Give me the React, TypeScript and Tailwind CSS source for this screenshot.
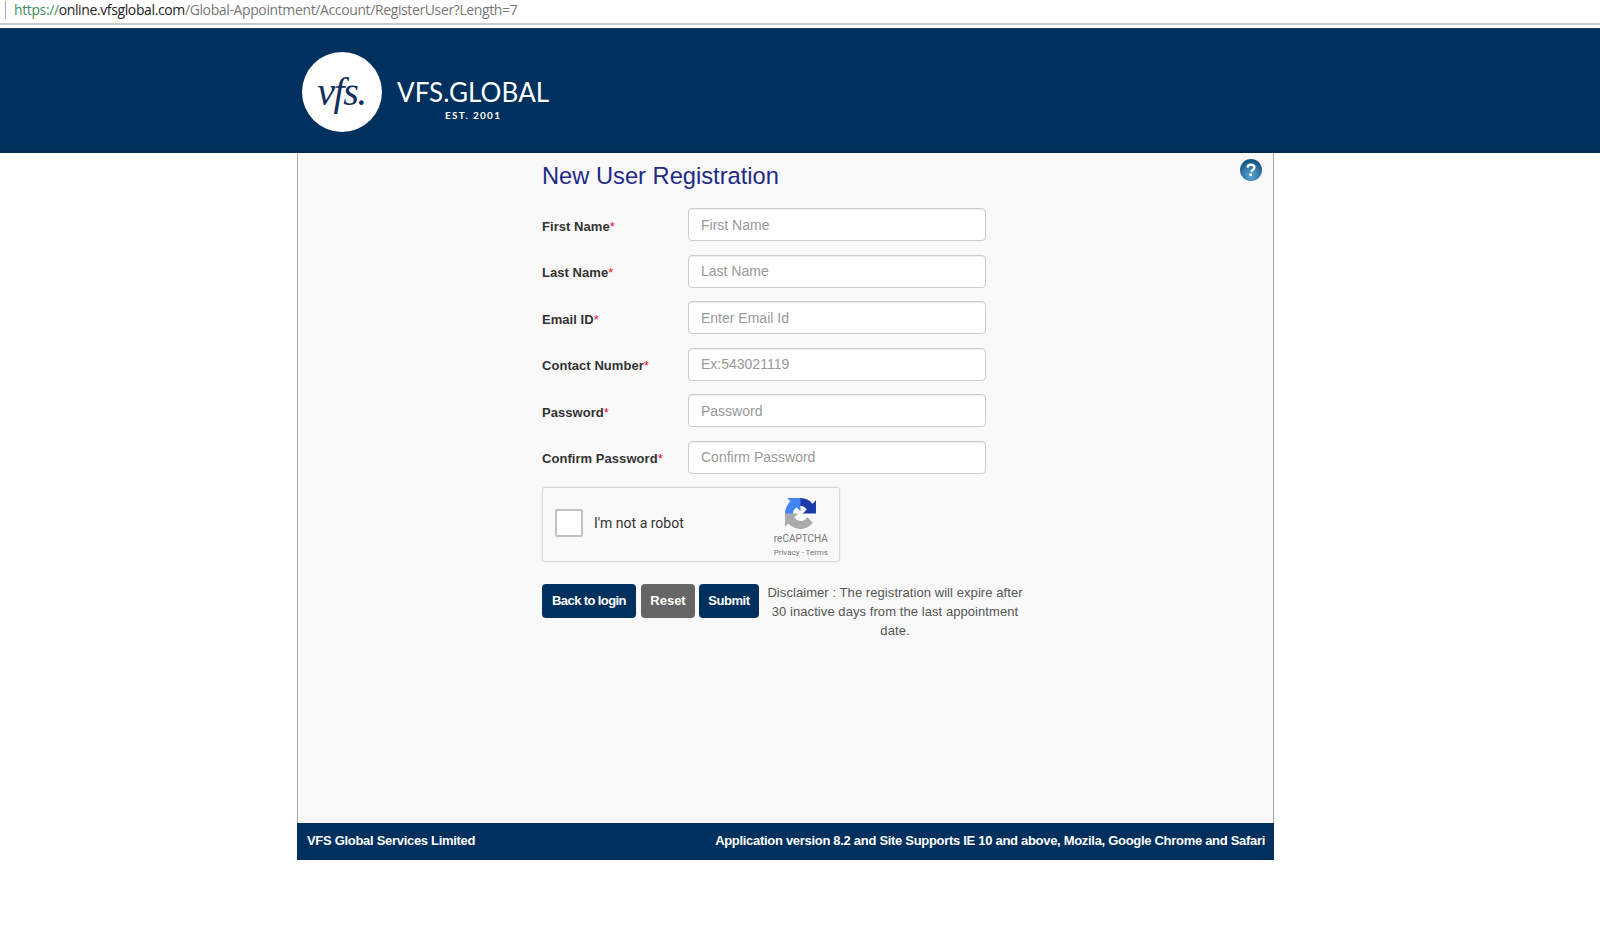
const fields = [
  { label: 'First Name', placeholder: 'First Name', type: 'text' },
  { label: 'Last Name', placeholder: 'Last Name', type: 'text' },
  { label: 'Email ID', placeholder: 'Enter Email Id', type: 'text' },
  { label: 'Contact Number', placeholder: 'Ex:543021119', type: 'text' },
  { label: 'Password', placeholder: 'Password', type: 'password' },
  { label: 'Confirm Password', placeholder: 'Confirm Password', type: 'password' },
]

function RecaptchaIcon() {
  return (
    <svg viewBox="0 0 64 64" className="w-[31px] h-[31px]">
      <path d="M64 31.955l-.033-1.37V4.687l-7.16 7.16C50.948 4.674 42.033.093 32.05.093c-10.4 0-19.622 4.96-25.458 12.64l11.736 11.86a15.55 15.55 0 0 1 4.754-5.334c2.05-1.6 4.952-2.906 8.968-2.906.485 0 .86.057 1.135.163 4.976.393 9.288 3.14 11.828 7.124l-8.307 8.307 32.294.008" fill="#1c3aa9" />
      <path d="M31.862.094l-1.37.033H4.594l7.16 7.16C4.58 13.147 0 22.06 0 32.046c0 10.4 4.96 19.622 12.64 25.458L24.5 45.768a15.55 15.55 0 0 1-5.334-4.754c-1.6-2.05-2.906-4.952-2.906-8.968 0-.485.057-.86.163-1.135.393-4.976 3.14-9.288 7.124-11.828l8.307 8.307L31.862.094" fill="#4285f4" />
      <path d="M.001 32.045l.033 1.37v25.898l7.16-7.16c5.86 7.173 14.774 11.754 24.76 11.754 10.4 0 19.622-4.96 25.458-12.64l-11.736-11.86a15.55 15.55 0 0 1-4.754 5.334c-2.05 1.6-4.952 2.906-8.968 2.906-.485 0-.86-.057-1.135-.163-4.976-.393-9.288-3.14-11.828-7.124l8.307-8.307-32.294-.008" fill="#ababab" />
    </svg>
  )
}

function HelpIcon() {
  return (
    <svg viewBox="0 0 22 22" className="w-[22px] h-[22px]">
      <defs>
        <radialGradient id="help" cx="50%" cy="75%" r="70%">
          <stop offset="0%" stopColor="#5aa9d8" />
          <stop offset="100%" stopColor="#15527f" />
        </radialGradient>
      </defs>
      <circle cx="11" cy="11" r="11" fill="url(#help)" />
      <path d="M7.6 8.6c.1-2 1.5-3 3.4-3 2 0 3.4 1.1 3.4 2.8 0 1.3-.8 1.9-1.7 2.6-.8.6-1.1.9-1.1 1.8" fill="none" stroke="#fff" strokeWidth="2.4" />
      <rect x="9.4" y="14.4" width="2.6" height="2.6" fill="#fff" />
    </svg>
  )
}

export default function App() {
  return (
    <div className="min-h-[930px] bg-white font-['Liberation_Sans',Arial,sans-serif]">
      {/* Address bar */}
      <div className="h-[28px] flex flex-col">
        <div className="h-[23px] flex items-center pl-[5px] pb-[4px]">
          <span className="w-px h-[18px] bg-[#aaa]" />
          <span className="ml-[8px] text-[14px] text-[#777] font-['Open_Sans',sans-serif] tracking-[-0.38px] whitespace-nowrap">
            <span className="text-[#3f8f5f]">https://</span>
            <span className="text-[#222]">online.vfsglobal.com</span>
            /Global-Appointment/Account/RegisterUser?Length=7
          </span>
        </div>
        <div className="h-[5px] bg-white border-t-2 border-[#c9c9c9]" />
      </div>

      {/* Header */}
      <header className="h-[125px] bg-[#00305e] border-t border-[#1c3a5c] border-b-2 border-b-[#002a55] pl-[302px] flex items-center">
        <div className="w-[80px] h-[80px] mt-[3px] rounded-full bg-white flex items-center justify-center">
          <span className="text-[#12305c] text-[40px] leading-none italic font-['Liberation_Serif',serif] tracking-[-1.5px] pr-[1px]">vfs.</span>
        </div>
        <div className="ml-[15px] mt-[17px] flex flex-col items-center text-white">
          <span className="text-[26px] leading-[30px] font-['Lato',sans-serif] tracking-[0.1px]">VFS.GLOBAL</span>
          <span className="text-[10px] leading-[12px] mt-[2px] font-bold font-['Lato',sans-serif] tracking-[1.3px]">EST. 2001</span>
        </div>
      </header>

      {/* Main panel */}
      <div className="w-[977px] ml-[297px]">
        <main className="h-[670px] bg-[#f9f9f9] border-x border-[#a9a9a9] pl-[244px] pr-[11px] flex justify-between">
          <div className="w-[500px]">
            <h1 className="text-[23.7px] leading-[28px] mt-[9px] text-[#1f2a86]">New User Registration</h1>
            <form className="mt-[18px] flex flex-col gap-[13.5px]">
              {fields.map((f) => (
                <div key={f.label} className="flex items-center">
                  <label className="w-[146px] mt-[4px] text-[13px] font-bold text-[#333] tracking-[0.05px]">
                    {f.label}<span className="text-[#ee1133] font-normal">*</span>
                  </label>
                  <input
                    type={f.type}
                    placeholder={f.placeholder}
                    className="w-[298px] h-[33px] px-[12px] bg-white border border-[#ccc] rounded-[4px] text-[14px] text-[#555] outline-none shadow-[inset_0_1px_1px_rgba(0,0,0,0.075)] placeholder:text-[#999]"
                  />
                </div>
              ))}
            </form>

            <div className="mt-[13.5px] w-[298px] h-[75px] bg-[#f9f9f9] border border-[#d6d6d6] rounded-[3px] shadow-[0_0_2px_rgba(0,0,0,0.12)] flex items-center pl-[12px] pr-[11px]">
              <span className="w-[28px] h-[28px] mb-[4px] bg-white border-2 border-[#c1c1c1] rounded-[2px]" />
              <span className="ml-[11px] mb-[2px] text-[14px] text-[#333] font-['Roboto',sans-serif]">I'm not a robot</span>
              <div className="ml-auto self-start mt-[10px] flex flex-col items-center font-['Roboto',sans-serif] text-[#777]">
                <RecaptchaIcon />
                <span className="text-[10px] leading-[12px] mt-[3.5px]">reCAPTCHA</span>
                <span className="text-[8px] leading-[10px] mt-[3px]">Privacy - Terms</span>
              </div>
            </div>

            <div className="mt-[22px] flex items-start">
              <button className="w-[94px] h-[34px] rounded-[4px] bg-[#00305e] text-white text-[13px] font-bold tracking-[-0.6px]">Back to login</button>
              <button className="w-[54px] h-[34px] ml-[5px] rounded-[4px] bg-[#666] text-white text-[13px] font-bold">Reset</button>
              <button className="w-[60px] h-[34px] ml-[4px] rounded-[4px] bg-[#00305e] text-white text-[13px] font-bold tracking-[-0.45px]">Submit</button>
              <p className="w-[262px] ml-[5px] mt-[-1px] text-center text-[13px] leading-[19px] tracking-[0.07px] text-[#555]">
                Disclaimer : The registration will expire after 30 inactive days from the last appointment date.
              </p>
            </div>
          </div>
          <div className="mt-[6px]">
            <HelpIcon />
          </div>
        </main>

        {/* Footer */}
        <footer className="h-[37px] bg-[#00305e] pl-[10px] pr-[9px] pb-[2px] flex items-center justify-between text-white text-[13px] font-bold tracking-[-0.3px]">
          <span>VFS Global Services Limited</span>
          <span>Application version 8.2 and Site Supports IE 10 and above, Mozila, Google Chrome and Safari</span>
        </footer>
      </div>
    </div>
  )
}
